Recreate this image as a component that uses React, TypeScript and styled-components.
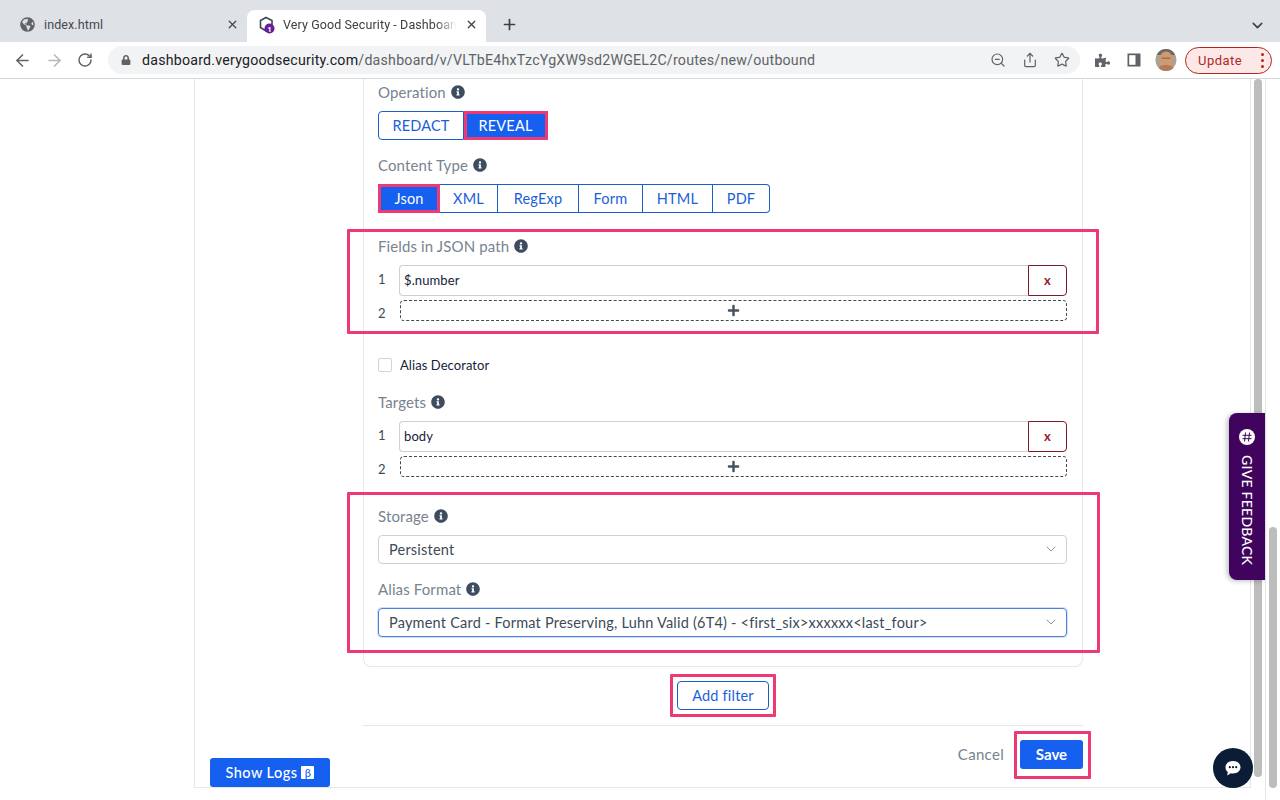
import React from "react";
import styled, { createGlobalStyle } from "styled-components";
import { ArrowLeft, ArrowRight, RotateCw, X, Plus, ChevronDown, ZoomOut, Share, Star } from "lucide-react";
import { FaGlobeAmericas, FaLock, FaPuzzlePiece, FaInfoCircle, FaPlus } from "react-icons/fa";

const Global = createGlobalStyle`
  html, body { margin: 0; padding: 0; background: #fff; }
  body { font-family: Lato, "Open Sans", sans-serif; }
  * { box-sizing: border-box; }
`;

const Page = styled.div`
  position: relative;
  width: 1280px;
  height: 800px;
  overflow: hidden;
  background: #fff;
`;

/* ---------- browser chrome ---------- */
const TabStrip = styled.div`
  height: 42px;
  background: #dee1e6;
  display: flex;
  align-items: flex-end;
  padding-left: 8px;
  color: #45484d;
  font-family: Roboto, "Liberation Sans", sans-serif;
`;
const Tab = styled.div<{ $active?: boolean }>`
  width: 239px;
  height: 32px;
  display: flex;
  align-items: center;
  padding: 0 8px 3px 12px;
  gap: ${(p) => (p.$active ? 8 : 9)}px;
  font-size: 12.5px;
  letter-spacing: 0.1px;
  background: ${(p) => (p.$active ? "#fff" : "transparent")};
  border-radius: 8px 8px 0 0;
  color: ${(p) => (p.$active ? "#3c4043" : "#45484d")};
`;
const TabTitle = styled.span<{ $fade?: boolean }>`
  flex: 1;
  white-space: nowrap;
  overflow: hidden;
  ${(p) => p.$fade && "mask-image: linear-gradient(90deg, #000 88%, transparent 100%);"}
`;
const NewTab = styled.div`
  display: flex;
  align-items: center;
  justify-content: center;
  width: 46px;
  height: 32px;
  padding-bottom: 3px;
  color: #3c4043;
`;
const TabMenu = styled.div`
  margin-left: auto;
  margin-right: 14px;
  height: 32px;
  padding-bottom: 2px;
  display: flex;
  align-items: center;
  color: #3c4043;
`;
const Toolbar = styled.div`
  height: 37px;
  display: flex;
  align-items: center;
  padding-left: 13px;
  background: #fff;
  border-bottom: 1px solid #d6d7d9;
  color: #5f6368;
`;
const NavIcons = styled.div`
  display: flex;
  align-items: center;
  gap: 13px;
  width: 95px;
`;
const AddressBar = styled.div`
  width: 972px;
  height: 28px;
  border-radius: 14px;
  background: #f1f3f4;
  display: flex;
  align-items: center;
  padding: 0 10px 0 13px;
  font-family: Roboto, "Liberation Sans", sans-serif;
  font-size: 14.2px;
  letter-spacing: 0.22px;
`;
const Url = styled.span`
  margin-left: 11px;
  flex: 1;
  color: #5f6368;
  white-space: nowrap;
`;
const UrlHost = styled.span`
  color: #202124;
`;
const AddressIcons = styled.div`
  display: flex;
  align-items: center;
  gap: 16px;
  color: #5f6368;
`;
const Extensions = styled.div`
  display: flex;
  align-items: center;
  margin-left: 15px;
  gap: 17px;
`;
const AvatarSlot = styled.div`
  display: flex;
  align-items: center;
  margin-left: 14px;
`;
const UpdatePill = styled.div`
  margin-left: 8px;
  width: 87px;
  height: 27px;
  border: 1px solid #b3261e;
  border-radius: 14px;
  background: #fce8e6;
  color: #b3261e;
  display: flex;
  align-items: center;
  justify-content: space-between;
  padding: 0 7px 0 12px;
  font-family: Roboto, "Liberation Sans", sans-serif;
  font-size: 13px;
  letter-spacing: 0.45px;
`;
const Dots = styled.div`
  display: flex;
  flex-direction: column;
  gap: 3px;
`;
const Dot = styled.i`
  display: block;
  width: 3px;
  height: 3px;
  border-radius: 50%;
  background: #b3261e;
`;

/* ---------- page body ---------- */
const Viewport = styled.div`
  display: flex;
  height: 721px;
`;
const Sheet = styled.div`
  margin-left: 194px;
  width: 1057px;
  height: 709px;
  border-left: 1px solid #e6e7e9;
  border-right: 1px solid #e6e7e9;
  border-bottom: 1px solid #e6e7e9;
  padding-left: 168px;
`;
const FormColumn = styled.div`
  width: 720px;
  display: flex;
  flex-direction: column;
`;
const Card = styled.div`
  border: 1px solid #e6e7e9;
  border-top: 0;
  border-radius: 0 0 8px 8px;
  padding: 3px 15px 29px 14px;
  height: 588px;
`;
const Label = styled.div<{ $top?: number }>`
  display: flex;
  align-items: center;
  gap: 5px;
  height: 20px;
  padding-bottom: 1px;
  margin-top: ${(p) => p.$top ?? 0}px;
  margin-bottom: 9px;
  font-size: 15px;
  letter-spacing: 0.12px;
  color: #77838f;
  svg { color: #3d4c5e; flex: none; }
`;
const Group = styled.div`
  display: flex;
  height: 29px;
`;
const Seg = styled.div<{ $w: number; $on?: boolean; $first?: boolean; $last?: boolean; $mark?: boolean }>`
  width: ${(p) => p.$w}px;
  height: 100%;
  padding-bottom: 1px;
  display: flex;
  align-items: center;
  justify-content: center;
  font-size: 14.5px;
  letter-spacing: 0.2px;
  color: ${(p) => (p.$on ? "#fff" : "#1a5fd8")};
  background: ${(p) => (p.$on ? "#1660f0" : "#fff")};
  border: 1px solid #1a5fc8;
  border-left-width: ${(p) => (p.$first ? 1 : 0)}px;
  border-radius: ${(p) => (p.$first ? "4px 0 0 4px" : p.$last ? "0 4px 4px 0" : "0")};
  ${(p) => p.$mark && "outline: 3px solid #ee3a74; outline-offset: -3px; border-radius: 0;"}
`;
const Marked = styled.div`
  position: relative;
  display: flow-root;
`;
const MarkBox = styled.div<{ $t: number; $r: number; $b: number; $l: number }>`
  position: absolute;
  top: ${(p) => p.$t}px;
  right: ${(p) => p.$r}px;
  bottom: ${(p) => p.$b}px;
  left: ${(p) => p.$l}px;
  border: 3px solid #ee3a74;
  border-radius: 1px;
  pointer-events: none;
`;
const Row = styled.div<{ $top?: number }>`
  display: flex;
  align-items: center;
  margin-top: ${(p) => p.$top ?? 0}px;
`;
const Index = styled.div<{ $shift?: number }>`
  width: 21px;
  flex: none;
  font-size: 13px;
  color: #3f4a55;
  margin-top: ${(p) => p.$shift ?? 0}px;
`;
const PathInput = styled.div`
  flex: 1;
  height: 31px;
  display: flex;
  align-items: center;
  padding: 0 0 2px 4px;
  font-size: 13px;
  letter-spacing: 0.1px;
  color: #16233a;
  border: 1px solid #cfcfcf;
  border-right: 0;
  border-radius: 4px 0 0 4px;
`;
const RemoveBtn = styled.div`
  width: 39px;
  height: 31px;
  padding-bottom: 2px;
  display: flex;
  align-items: center;
  justify-content: center;
  font-size: 13px;
  font-weight: 700;
  color: #96202e;
  border: 1px solid #7d1a2a;
  border-radius: 0 4px 4px 0;
`;
const AddRow = styled.div`
  margin-left: 1px;
  flex: 1;
  height: 21px;
  display: flex;
  align-items: center;
  justify-content: center;
  color: #46535f;
  border: 1px dashed #3f4a55;
  border-radius: 4px;
`;
const CheckRow = styled.div`
  display: flex;
  align-items: center;
  height: 20px;
  margin-top: 34px;
  gap: 8px;
  font-size: 13px;
  letter-spacing: 0.07px;
  color: #16233a;
`;
const CheckBox = styled.div`
  width: 14px;
  height: 14px;
  border: 1px solid #d2d4d7;
  border-radius: 2px;
`;
const CheckText = styled.span`
  padding-bottom: 1px;
`;
const Select = styled.div<{ $focus?: boolean }>`
  height: 29px;
  display: flex;
  align-items: center;
  justify-content: space-between;
  padding: 0 7px 1px 10px;
  font-size: 14.5px;
  letter-spacing: 0.21px;
  color: #3c4a57;
  border: 1px solid ${(p) => (p.$focus ? "#4d7fdc" : "#cfd1d4")};
  border-radius: 4px;
  ${(p) => p.$focus && "box-shadow: 0 0 0 1px rgba(77,127,220,0.25);"}
  svg { color: #77838f; flex: none; }
`;
const CenterRow = styled.div`
  display: flex;
  justify-content: center;
  margin-top: 14px;
`;
const OutlineBtn = styled.div`
  width: 92px;
  height: 29px;
  padding-bottom: 1px;
  display: flex;
  align-items: center;
  justify-content: center;
  font-size: 14.5px;
  letter-spacing: 0.2px;
  color: #1a5fd8;
  border: 1px solid #1a5fc8;
  border-radius: 4px;
`;
const Divider = styled.div`
  height: 1px;
  background: #e6e7e9;
  margin-top: 15px;
`;
const Footer = styled.div`
  display: flex;
  justify-content: flex-end;
  align-items: center;
  gap: 16px;
  margin-top: 14px;
`;
const CancelText = styled.div`
  font-size: 15px;
  padding-bottom: 1px;
  letter-spacing: 0.3px;
  color: #77838f;
`;
const SaveBtn = styled.div`
  width: 63px;
  height: 29px;
  padding-bottom: 2px;
  display: flex;
  align-items: center;
  justify-content: center;
  font-size: 15px;
  font-weight: 700;
  color: #fff;
  background: #1660f0;
  border-radius: 3px;
`;
const Rail = styled.div<{ $w: number; $pad: number; $line?: boolean }>`
  width: ${(p) => p.$w}px;
  flex: none;
  padding-left: ${(p) => p.$pad}px;
  ${(p) => p.$line && "border-left: 1px solid #e6e7e9;"}
`;
const Thumb = styled.div<{ $top: number; $h: number }>`
  width: 8px;
  margin-top: ${(p) => p.$top}px;
  height: ${(p) => p.$h}px;
  border-radius: 4px;
  background: #bdbdbd;
`;

/* ---------- floating ---------- */
const LogsBtn = styled.div`
  position: absolute;
  left: 210px;
  top: 758px;
  width: 120px;
  height: 29px;
  padding-bottom: 1px;
  display: flex;
  align-items: center;
  justify-content: center;
  gap: 4px;
  background: #1660f0;
  color: #fff;
  font-size: 14.5px;
  font-weight: 500;
  letter-spacing: 0.45px;
  border-radius: 3px;
`;
const Beta = styled.span`
  width: 13px;
  height: 13px;
  display: flex;
  align-items: center;
  justify-content: center;
  background: #fff;
  color: #1660f0;
  font-size: 11px;
  border-radius: 1px;
`;
const Feedback = styled.div`
  position: absolute;
  left: 1229px;
  top: 413px;
  width: 36px;
  height: 167px;
  padding-top: 16px;
  display: flex;
  flex-direction: column;
  align-items: center;
  gap: 10px;
  background: #41045e;
  border-radius: 8px 0 0 8px;
  box-shadow: -2px 1px 5px rgba(0, 0, 0, 0.25);
`;
const FeedbackText = styled.div`
  writing-mode: vertical-rl;
  color: #fff;
  font-size: 14px;
  letter-spacing: 0.25px;
  font-weight: 500;
  white-space: nowrap;
`;
const ChatBtn = styled.div`
  position: absolute;
  left: 1213px;
  top: 748px;
  width: 40px;
  height: 40px;
  border-radius: 50%;
  background: #0b1c36;
  display: flex;
  align-items: center;
  justify-content: center;
`;

const Info = () => <FaInfoCircle size={14} />;

const PathRows = ({ value }: { value: string }) => (
  <>
    <Row>
      <Index $shift={-3}>1</Index>
      <PathInput>{value}</PathInput>
      <RemoveBtn>x</RemoveBtn>
    </Row>
    <Row $top={4}>
      <Index $shift={5}>2</Index>
      <AddRow>
        <FaPlus size={13} />
      </AddRow>
    </Row>
  </>
);

const Favicon = () => (
  <svg width="16" height="18" viewBox="0 0 16 18">
    <path d="M7 1.5 13 4.5V11L7 15 1.5 11.5V4.5Z" fill="none" stroke="#3a4658" strokeWidth="1.6" />
    <circle cx="10.5" cy="12.5" r="5" fill="#6a1b9a" />
    <text x="10.5" y="15.5" fontSize="8" fontWeight="700" textAnchor="middle" fill="#fff" fontFamily="Roboto, sans-serif">1</text>
  </svg>
);

const SidePanelIcon = () => (
  <svg width="14" height="14" viewBox="0 0 14 14">
    <rect x="0.5" y="0.5" width="13" height="13" fill="#5f6368" />
    <rect x="2.2" y="2.2" width="6.3" height="9.6" fill="#fff" />
  </svg>
);

const Avatar = () => (
  <svg width="22" height="22" viewBox="0 0 22 22">
    <defs>
      <clipPath id="av"><ellipse cx="11" cy="11" rx="10.500" ry="11" /></clipPath>
    </defs>
    <g clipPath="url(#av)">
      <rect width="22" height="22" fill="#a9a297" />
      <rect y="0" width="22" height="6" fill="#6e6a62" />
      <ellipse cx="11" cy="10.500" rx="6.500" ry="8" fill="#cf9a72" />
      <rect x="6.500" y="8.500" width="9" height="1.500" fill="#7a5238" opacity="0.55" />
      <path d="M2 22c1-5 5-6 9-6s8 1 9 6Z" fill="#b47a55" />
    </g>
  </svg>
);

const ChatIcon = () => (
  <svg width="18" height="18" viewBox="0 0 18 18">
    <path d="M9 2c4.400 0 7.500 2.600 7.500 6.200S13.400 14.400 9 14.400c-.8 0-1.500-.1-2.200-.2L3.200 16.500l.6-3.600C2.300 11.800 1.500 10.200 1.500 8.200 1.500 4.600 4.600 2 9 2Z" fill="#fff" />
    <circle cx="5.800" cy="8.200" r="1.100" fill="#0b1c36" />
    <circle cx="9" cy="8.200" r="1.100" fill="#0b1c36" />
    <circle cx="12.200" cy="8.200" r="1.100" fill="#0b1c36" />
  </svg>
);

const HashBadge = () => (
  <svg width="16" height="16" viewBox="0 0 16 16">
    <circle cx="8" cy="8" r="8" fill="#fff" />
    <path d="M6.500 3.500 5.500 12.500M10.500 3.500 9.500 12.500M3.500 6.300H12.500M3.500 9.700H12.500" stroke="#41045e" strokeWidth="1" fill="none" />
  </svg>
);

export default function App() {
  return (
    <Page>
      <Global />
      <TabStrip>
        <Tab>
          <FaGlobeAmericas size={15} color="#5f6368" />
          <TabTitle>index.html</TabTitle>
          <X size={13} strokeWidth={2.4} />
        </Tab>
        <Tab $active>
          <Favicon />
          <TabTitle $fade>Very Good Security - Dashboard</TabTitle>
          <X size={13} strokeWidth={2.4} />
        </Tab>
        <NewTab>
          <Plus size={17} strokeWidth={2.4} />
        </NewTab>
        <TabMenu>
          <ChevronDown size={17} strokeWidth={2.2} />
        </TabMenu>
      </TabStrip>
      <Toolbar>
        <NavIcons>
          <ArrowLeft size={19} strokeWidth={2} />
          <ArrowRight size={19} strokeWidth={2} color="#b4b7bb" />
          <RotateCw size={16} strokeWidth={2.2} />
        </NavIcons>
        <AddressBar>
          <FaLock size={10} color="#5f6368" />
          <Url>
            <UrlHost>dashboard.verygoodsecurity.com</UrlHost>
            /dashboard/v/VLTbE4hxTzcYgXW9sd2WGEL2C/routes/new/outbound
          </Url>
          <AddressIcons>
            <ZoomOut size={16} strokeWidth={1.8} />
            <Share size={16} strokeWidth={1.8} />
            <Star size={16} strokeWidth={1.8} />
          </AddressIcons>
        </AddressBar>
        <Extensions>
          <FaPuzzlePiece size={15} />
          <SidePanelIcon />
        </Extensions>
        <AvatarSlot>
          <Avatar />
        </AvatarSlot>
        <UpdatePill>
          Update
          <Dots>
            <Dot />
            <Dot />
            <Dot />
          </Dots>
        </UpdatePill>
      </Toolbar>
      <Viewport>
        <Sheet>
          <FormColumn>
            <Card>
              <Label>
                Operation <Info />
              </Label>
              <Group>
                <Seg $w={86} $first>REDACT</Seg>
                <Seg $w={84} $on $last $mark>REVEAL</Seg>
              </Group>
              <Label $top={15}>
                Content Type <Info />
              </Label>
              <Group>
                <Seg $w={62} $on $first $mark>Json</Seg>
                <Seg $w={58}>XML</Seg>
                <Seg $w={81}>RegExp</Seg>
                <Seg $w={64}>Form</Seg>
                <Seg $w={70}>HTML</Seg>
                <Seg $w={57} $last>PDF</Seg>
              </Group>
              <Marked>
                <MarkBox $t={16} $r={-32} $b={-13} $l={-31} />
                <Label $top={23}>
                  Fields in JSON path <Info />
                </Label>
                <PathRows value="$.number" />
              </Marked>
              <CheckRow>
                <CheckBox />
                <CheckText>Alias Decorator</CheckText>
              </CheckRow>
              <Label $top={17}>
                Targets <Info />
              </Label>
              <PathRows value="body" />
              <Marked>
                <MarkBox $t={15} $r={-33} $b={-16} $l={-31} />
                <Label $top={29}>
                  Storage <Info />
                </Label>
                <Select>
                  Persistent
                  <ChevronDown size={16} strokeWidth={1.3} />
                </Select>
                <Label $top={15}>
                  Alias Format <Info />
                </Label>
                <Select $focus>
                  {"Payment Card - Format Preserving, Luhn Valid (6T4) - <first_six>xxxxxx<last_four>"}
                  <ChevronDown size={16} strokeWidth={1.3} />
                </Select>
              </Marked>
            </Card>
            <CenterRow>
              <Marked>
                <MarkBox $t={-7} $r={-7} $b={-7} $l={-7} />
                <OutlineBtn>Add filter</OutlineBtn>
              </Marked>
            </CenterRow>
            <Divider />
            <Footer>
              <CancelText>Cancel</CancelText>
              <Marked>
                <MarkBox $t={-9} $r={-8} $b={-10} $l={-6} />
                <SaveBtn>Save</SaveBtn>
              </Marked>
            </Footer>
          </FormColumn>
        </Sheet>
        <Rail $w={14} $pad={3}>
          <Thumb $top={0} $h={698} />
        </Rail>
        <Rail $w={15} $pad={3} $line>
          <Thumb $top={448} $h={261} />
        </Rail>
      </Viewport>
      <LogsBtn>
        Show Logs <Beta>β</Beta>
      </LogsBtn>
      <Feedback>
        <HashBadge />
        <FeedbackText>GIVE FEEDBACK</FeedbackText>
      </Feedback>
      <ChatBtn>
        <ChatIcon />
      </ChatBtn>
    </Page>
  );
}
